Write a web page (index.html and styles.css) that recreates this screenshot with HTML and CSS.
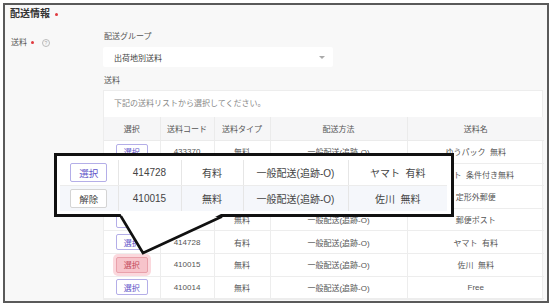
FILE: index.html
```html
<!DOCTYPE html>
<html lang="ja">
<head>
    <meta charset="UTF-8">
    <title>配送情報</title>
    <link rel="stylesheet" href="styles.css">
</head>
<body>
    <div class="frame">
        <div class="section-title">配送情報<span class="req"></span></div>

        <div class="field">
            <div class="field-label">送料<span class="req"></span><span class="help">?</span></div>
            <div class="field-body">
                <div class="sub-label">配送グループ</div>
                <div class="select">
                    <span>出荷地別送料</span>
                    <span class="caret"></span>
                </div>
                <div class="sub-label second">送料</div>

                <div class="list">
                    <div class="list-note">下記の送料リストから選択してください。</div>
                    <table class="rates">
                        <colgroup>
                            <col style="width:56px">
                            <col style="width:54px">
                            <col style="width:56px">
                            <col style="width:137px">
                            <col style="width:137px">
                        </colgroup>
                        <thead>
                            <tr>
                                <th>選択</th>
                                <th>送料コード</th>
                                <th>送料タイプ</th>
                                <th>配送方法</th>
                                <th>送料名</th>
                            </tr>
                        </thead>
                        <tbody>
                            <tr>
                                <td><button class="btn">選択</button></td>
                                <td>433370</td>
                                <td>無料</td>
                                <td>一般配送(追跡-O)</td>
                                <td>ゆうパック&nbsp;&nbsp;無料</td>
                            </tr>
                            <tr>
                                <td><button class="btn">選択</button></td>
                                <td>414729</td>
                                <td>無料</td>
                                <td>一般配送(追跡-O)</td>
                                <td>ヤマト&nbsp;&nbsp;条件付き無料</td>
                            </tr>
                            <tr>
                                <td><button class="btn">選択</button></td>
                                <td>410016</td>
                                <td>無料</td>
                                <td>一般配送(追跡-O)</td>
                                <td>定形外郵便</td>
                            </tr>
                            <tr>
                                <td><button class="btn">選択</button></td>
                                <td>410017</td>
                                <td>無料</td>
                                <td>一般配送(追跡-O)</td>
                                <td>郵便ポスト</td>
                            </tr>
                            <tr>
                                <td><button class="btn">選択</button></td>
                                <td>414728</td>
                                <td>有料</td>
                                <td>一般配送(追跡-O)</td>
                                <td>ヤマト&nbsp;&nbsp;有料</td>
                            </tr>
                            <tr>
                                <td><button class="btn btn-active">選択</button></td>
                                <td>410015</td>
                                <td>無料</td>
                                <td>一般配送(追跡-O)</td>
                                <td>佐川&nbsp;&nbsp;無料</td>
                            </tr>
                            <tr>
                                <td><button class="btn">選択</button></td>
                                <td>410014</td>
                                <td>無料</td>
                                <td>一般配送(追跡-O)</td>
                                <td>Free</td>
                            </tr>
                        </tbody>
                    </table>
                </div>
            </div>
        </div>

        <!-- zoomed callout over the table -->
        <div class="callout">
            <table class="callout-table">
                <colgroup>
                    <col style="width:58px">
                    <col style="width:63px">
                    <col style="width:62px">
                    <col style="width:105px">
                    <col style="width:99px">
                </colgroup>
                <tr>
                    <td><button class="btn btn-big">選択</button></td>
                    <td>414728</td>
                    <td>有料</td>
                    <td>一般配送(追跡-O)</td>
                    <td>ヤマト&nbsp;&nbsp;有料</td>
                </tr>
                <tr class="selected">
                    <td><button class="btn btn-big btn-plain">解除</button></td>
                    <td>410015</td>
                    <td>無料</td>
                    <td>一般配送(追跡-O)</td>
                    <td>佐川&nbsp;&nbsp;無料</td>
                </tr>
            </table>
        </div>
        <svg class="tail" width="108" height="44" viewBox="0 0 108 44">
            <polygon points="2,0 25,40 105,0" fill="#fff"/>
            <polyline points="3,3.5 25,40 104,3.5" fill="none" stroke="#111" stroke-width="2.6" stroke-linejoin="miter"/>
        </svg>
    </div>
</body>
</html>
```

FILE: styles.css
```css
body {
    margin: 0;
    background-color: #fff;
    font-family: "Liberation Sans", "Noto Sans CJK JP", sans-serif;
}

.frame {
    position: relative;
    margin: 3px;
    width: 546px;
    height: 300px;
    box-sizing: border-box;
    border: 2px solid #5a5a5a;
    background-color: #f8f8f8;
    overflow: hidden;
    padding: 2px 0 0 5px;
}

.section-title {
    font-size: 10px;
    line-height: 14px;
    font-weight: bold;
    color: #333;
    display: flex;
    align-items: center;
}

.req {
    display: inline-block;
    width: 3px;
    height: 3px;
    border-radius: 50%;
    background-color: #e0393e;
    margin-left: 5px;
}

.field {
    display: flex;
    margin-top: 10px;
}

.field-label {
    width: 92px;
    padding-left: 1px;
    margin-top: 6px;
    font-size: 8px;
    line-height: 12px;
    color: #555;
    display: flex;
    align-items: flex-start;
}

.field-label .req {
    margin-top: 4px;
    margin-left: 4px;
}

.help {
    display: inline-block;
    width: 6px;
    height: 6px;
    margin-left: 8px;
    margin-top: 2px;
    border: 1px solid #bbb;
    border-radius: 50%;
    font-size: 5px;
    line-height: 6px;
    text-align: center;
    color: #aaa;
}

.field-body {
    width: 440px;
}

.sub-label {
    font-size: 8px;
    line-height: 12px;
    color: #555;
    padding-left: 1px;
    margin-bottom: 4px;
}

.sub-label.second {
    margin-top: 8px;
    margin-bottom: 3px;
}

.select {
    width: 230px;
    height: 20px;
    box-sizing: border-box;
    background-color: #fff;
    border-radius: 2px;
    display: flex;
    align-items: center;
    justify-content: space-between;
    padding: 0 8px 0 11px;
    font-size: 8px;
    color: #444;
}

.caret {
    width: 0;
    height: 0;
    border-left: 3px solid transparent;
    border-right: 3px solid transparent;
    border-top: 3px solid #aaa;
}

.list {
    background-color: #fff;
    border: 1px solid #ededed;
    box-sizing: border-box;
}

.list-note {
    height: 26px;
    line-height: 26px;
    padding-left: 10px;
    font-size: 8px;
    color: #888;
}

.rates {
    width: 100%;
    border-collapse: collapse;
    table-layout: fixed;
    font-size: 8px;
    color: #555;
    text-align: center;
}

.rates th {
    height: 23px;
    padding: 0;
    font-weight: normal;
    background-color: #f6f6f7;
    border: 1px solid #ebebeb;
    border-top: none;
}

.rates td {
    height: 21.6px;
    padding: 0;
    border: 1px solid #ededed;
}

.rates th:first-child,
.rates td:first-child {
    border-left: none;
}

.rates th:last-child,
.rates td:last-child {
    border-right: none;
}

.btn {
    width: 32px;
    height: 16px;
    padding: 0;
    font-family: inherit;
    font-size: 8px;
    color: #5f55c9;
    background-color: #fff;
    border: 1px solid #b4aee8;
    border-radius: 2px;
}

.btn-active {
    background-color: #f7c4cb;
    border-color: #e9a1ab;
    color: #c44b5c;
    box-shadow: 0 0 0 3px #fbd8dd;
}

.callout {
    position: absolute;
    left: 49px;
    top: 148px;
    width: 400px;
    height: 64px;
    box-sizing: border-box;
    border: 3px solid #111;
    background-color: #fff;
    padding: 4px 4px 4px 3px;
}

.callout-table {
    width: 387px;
    border-collapse: collapse;
    table-layout: fixed;
    font-size: 10px;
    color: #444;
    text-align: center;
}

.callout-table td {
    height: 25px;
    padding: 0;
    border-right: 1px solid #e6e6e6;
    border-bottom: 1px solid #ececec;
}

.callout-table td:last-child {
    border-right: none;
}

.callout-table .selected td {
    background-color: #f5f7fb;
    border-bottom: none;
}

.btn-big {
    width: 37px;
    height: 19px;
    font-size: 9.5px;
}

.btn-plain {
    color: #444;
    border-color: #d4d4d4;
}

.tail {
    position: absolute;
    left: 113px;
    top: 208px;
}
```
